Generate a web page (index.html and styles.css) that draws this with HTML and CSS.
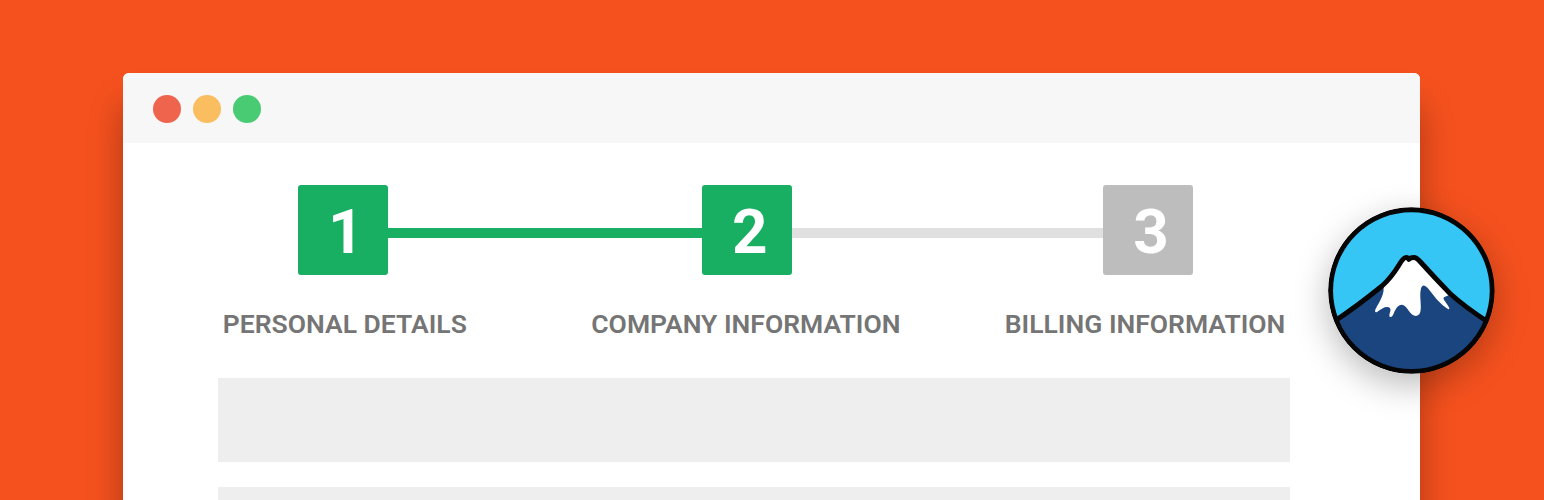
FILE: index.html
```html
<!DOCTYPE html>
<html lang="en">
<head>
<meta charset="utf-8">
<title>Multi-step form</title>
<link rel="stylesheet" href="styles.css">
</head>
<body>
<main class="banner">
  <section class="window">
    <header class="titlebar">
      <span class="dot dot-close"></span>
      <span class="dot dot-minimize"></span>
      <span class="dot dot-expand"></span>
    </header>
    <div class="content">
      <div class="track">
        <span class="step done">1</span>
        <span class="line line-done"></span>
        <span class="step done">2</span>
        <span class="line line-pending"></span>
        <span class="step">3</span>
      </div>
      <div class="labels">
        <span class="label">PERSONAL DETAILS</span>
        <span class="label label-company">COMPANY INFORMATION</span>
        <span class="label label-billing">BILLING INFORMATION</span>
      </div>
      <div class="fields">
        <div class="field"></div>
        <div class="field"></div>
      </div>
    </div>
  </section>
  <svg class="badge" viewBox="1328 207 167 167" aria-label="Mountain logo">
    <clipPath id="disc"><circle cx="1411.4" cy="290.6" r="81"/></clipPath>
    <circle cx="1411.4" cy="290.6" r="81" fill="#35c6f6"/>
    <g clip-path="url(#disc)">
      <path d="M1334 321.5C1350 311 1366 299 1382 286Q1391 278 1399 265Q1403 258 1406 257.5L1415 257.5Q1417 257.5 1421 262Q1434 277 1450 293.500Q1465 307 1488 322V380H1328Z" fill="#1a457e"/>
      <path d="M1383.300 287C1385 293 1380 301 1375.300 309.500Q1374.500 313 1377 312C1381 309 1384 307 1387 307Q1391 307 1390.400 311Q1388.500 316 1390 317Q1392.500 317.500 1394.500 311.500Q1398 303.800 1403 305C1408 307 1410 316 1416 316C1422 315 1421 308 1420.300 297Q1420 285.500 1423.500 285.500C1429 286 1434 300 1448 309Q1450.500 310 1448.500 306.500C1446 302 1441.500 298 1444.500 297Q1447 296 1449 295L1416 259H1405Z" fill="#fff"/>
      <path d="M1334 321.500C1350 311 1366 299 1382 286Q1391 278 1399 265Q1403 258 1405.500 257.600Q1407.500 257 1408.800 259.400Q1410 257.500 1414 257.500Q1416.500 257.500 1420.500 262Q1434 277 1450 293.500Q1465 307 1488 322" fill="none" stroke="#050505" stroke-width="5" stroke-linejoin="round"/>
    </g>
    <circle cx="1411.400" cy="290.600" r="80.800" fill="none" stroke="#050505" stroke-width="4.900"/>
  </svg>
</main>
</body>
</html>
```
FILE: styles.css
```css
body {
  margin: 0;
  overflow: hidden;
  font-family: Roboto, "Liberation Sans", sans-serif;
}

.banner {
  position: relative;
  box-sizing: border-box;
  height: 500px;
  padding: 73px 124px 0 123.400px;
  overflow: hidden;
  background: #f5511e;
}

.window {
  height: 600px;
  border-radius: 6px;
  background: #fff;
  box-shadow: 0 32px 34px rgba(0, 0, 0, 0.300);
}

.titlebar {
  display: flex;
  align-items: center;
  gap: 12px;
  box-sizing: border-box;
  height: 69.500px;
  padding: 3px 0 0 29.600px;
  border-radius: 6px 6px 0 0;
  background: #f7f7f7;
}

.dot {
  width: 28px;
  height: 28px;
  border-radius: 50%;
}

.dot-close { background: #ee644c; }
.dot-minimize { background: #fabd5f; }
.dot-expand { background: #48cb72; }

.content {
  padding: 42.500px 129.600px 0 94.600px;
}

.track {
  display: flex;
  align-items: center;
  padding-left: 80px;
}

.step {
  flex: none;
  box-sizing: border-box;
  width: 90px;
  height: 90px;
  padding-left: 5.400px;
  border-radius: 3px;
  background: #bdbdbd;
  color: #fff;
  font-size: 62px;
  font-weight: 700;
  line-height: 93px;
  text-align: center;
}

.done { background: #19af63; }

.line {
  flex: none;
  height: 10px;
  margin-top: 5px;
}

.line-done {
  width: 314px;
  background: #19af63;
}

.line-pending {
  width: 311.300px;
  background: #e0e0e0;
}

.labels {
  display: flex;
  height: 32px;
  margin-top: 33px;
  padding-left: 4.800px;
}

.label {
  color: #757575;
  flex: none;
  font-size: 26.500px;
  font-weight: 600;
  line-height: 32px;
  white-space: nowrap;
  width: 368.500px;
}

.label-company { width: 413.500px; }

.fields {
  display: grid;
  gap: 25px;
  margin-top: 37.500px;
}

.field {
  height: 84.500px;
  background: #eee;
}

.badge {
  position: absolute;
  left: 1328px;
  top: 207px;
  width: 167px;
  height: 167px;
  border-radius: 50%;
  box-shadow: 0 11px 34px rgba(0, 0, 0, 0.270);
}
```
